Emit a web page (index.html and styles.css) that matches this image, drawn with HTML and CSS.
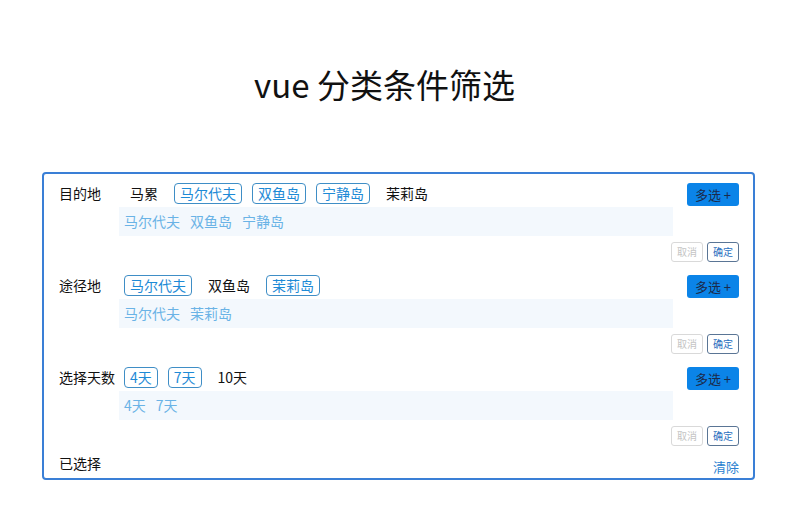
FILE: index.html
```html
<!DOCTYPE html>
<html lang="zh-CN">
<head>
<meta charset="utf-8">
<title>vue 分类条件筛选</title>
<link rel="stylesheet" href="styles.css">
</head>
<body>
<h1 class="title">vue 分类条件筛选</h1>
<div class="panel">
  <div class="filter-row">
    <div class="label">目的地</div>
    <div class="main">
      <div class="options">
        <span class="opt">马累</span>
        <span class="opt on">马尔代夫</span>
        <span class="opt on">双鱼岛</span>
        <span class="opt on">宁静岛</span>
        <span class="opt">茉莉岛</span>
      </div>
      <div class="selected">
        <span>马尔代夫</span><span>双鱼岛</span><span>宁静岛</span>
      </div>
    </div>
    <div class="side"><button class="multi">多选 +</button></div>
    <div class="actions"><button class="btn-sm cancel">取消</button><button class="btn-sm ok">确定</button></div>
  </div>

  <div class="filter-row">
    <div class="label">途径地</div>
    <div class="main">
      <div class="options">
        <span class="opt on">马尔代夫</span>
        <span class="opt">双鱼岛</span>
        <span class="opt on">茉莉岛</span>
      </div>
      <div class="selected">
        <span>马尔代夫</span><span>茉莉岛</span>
      </div>
    </div>
    <div class="side"><button class="multi">多选 +</button></div>
    <div class="actions"><button class="btn-sm cancel">取消</button><button class="btn-sm ok">确定</button></div>
  </div>

  <div class="filter-row">
    <div class="label">选择天数</div>
    <div class="main">
      <div class="options">
        <span class="opt on">4天</span>
        <span class="opt on">7天</span>
        <span class="opt">10天</span>
      </div>
      <div class="selected">
        <span>4天</span><span>7天</span>
      </div>
    </div>
    <div class="side"><button class="multi">多选 +</button></div>
    <div class="actions"><button class="btn-sm cancel">取消</button><button class="btn-sm ok">确定</button></div>
  </div>

  <div class="footer">
    <div class="footer-label">已选择</div>
    <a class="clear">清除</a>
  </div>
</div>
</body>
</html>
```
FILE: styles.css
```css
* { box-sizing: border-box; }
body {
  margin: 0;
  font-family: "Noto Sans CJK SC", "Microsoft YaHei", sans-serif;
  color: #111;
  background: #fff;
}
.title {
  margin: 0;
  padding-top: 63px;
  height: 172px;
  font-size: 33px;
  font-weight: 400;
  line-height: 42px;
  text-align: center;
  padding-right: 24px;
}
.panel {
  margin-left: 42px;
  width: 713px;
  border: 2px solid #3a7fd6;
  border-radius: 4px;
  padding: 9px 14px 3px 15px;
}
.filter-row {
  display: grid;
  grid-template-columns: 60px 1fr 52px;
  margin-bottom: 13px;
}
.label {
  font-size: 14px;
  line-height: 21px;
}
.main {
  min-width: 0;
  margin-right: 14px;
}
.options {
  display: flex;
  height: 24px;
  padding-left: 5px;
  font-size: 14px;
}
.opt {
  padding: 0 5px;
  border: 1px solid transparent;
  border-radius: 4px;
  margin-right: 10px;
  line-height: 19px;
  height: 21px;
}
.opt.on {
  border-color: #3f8ec6;
  color: #1e8ad6;
}
.selected {
  display: flex;
  gap: 10px;
  height: 29px;
  line-height: 29px;
  padding-left: 5px;
  background: #f3f8fd;
  color: #6ab3e6;
  font-size: 14px;
}
.multi {
  display: block;
  width: 52px;
  height: 23px;
  padding: 0;
  border: none;
  border-radius: 3px;
  background: #0b84e8;
  color: #1b2a4a;
  font-family: inherit;
  font-size: 13px;
  line-height: 23px;
}
.actions {
  grid-column: 1 / -1;
  display: flex;
  justify-content: flex-end;
  gap: 4px;
  margin-top: 6px;
}
.btn-sm {
  width: 32px;
  height: 20px;
  padding: 0;
  background: #fff;
  border: 1px solid #d9d9d9;
  border-radius: 3px;
  font-family: inherit;
  font-size: 10px;
  line-height: 18px;
}
.btn-sm.cancel { color: #c4c4c4; }
.btn-sm.ok { border-color: #5a7595; color: #2a6fc0; }
.footer {
  display: flex;
  justify-content: space-between;
  align-items: flex-end;
  margin-top: -8px;
}
.footer-label {
  font-size: 14px;
  line-height: 24px;
}
.clear {
  font-size: 13px;
  line-height: 17px;
  color: #2a7fd0;
}
```
